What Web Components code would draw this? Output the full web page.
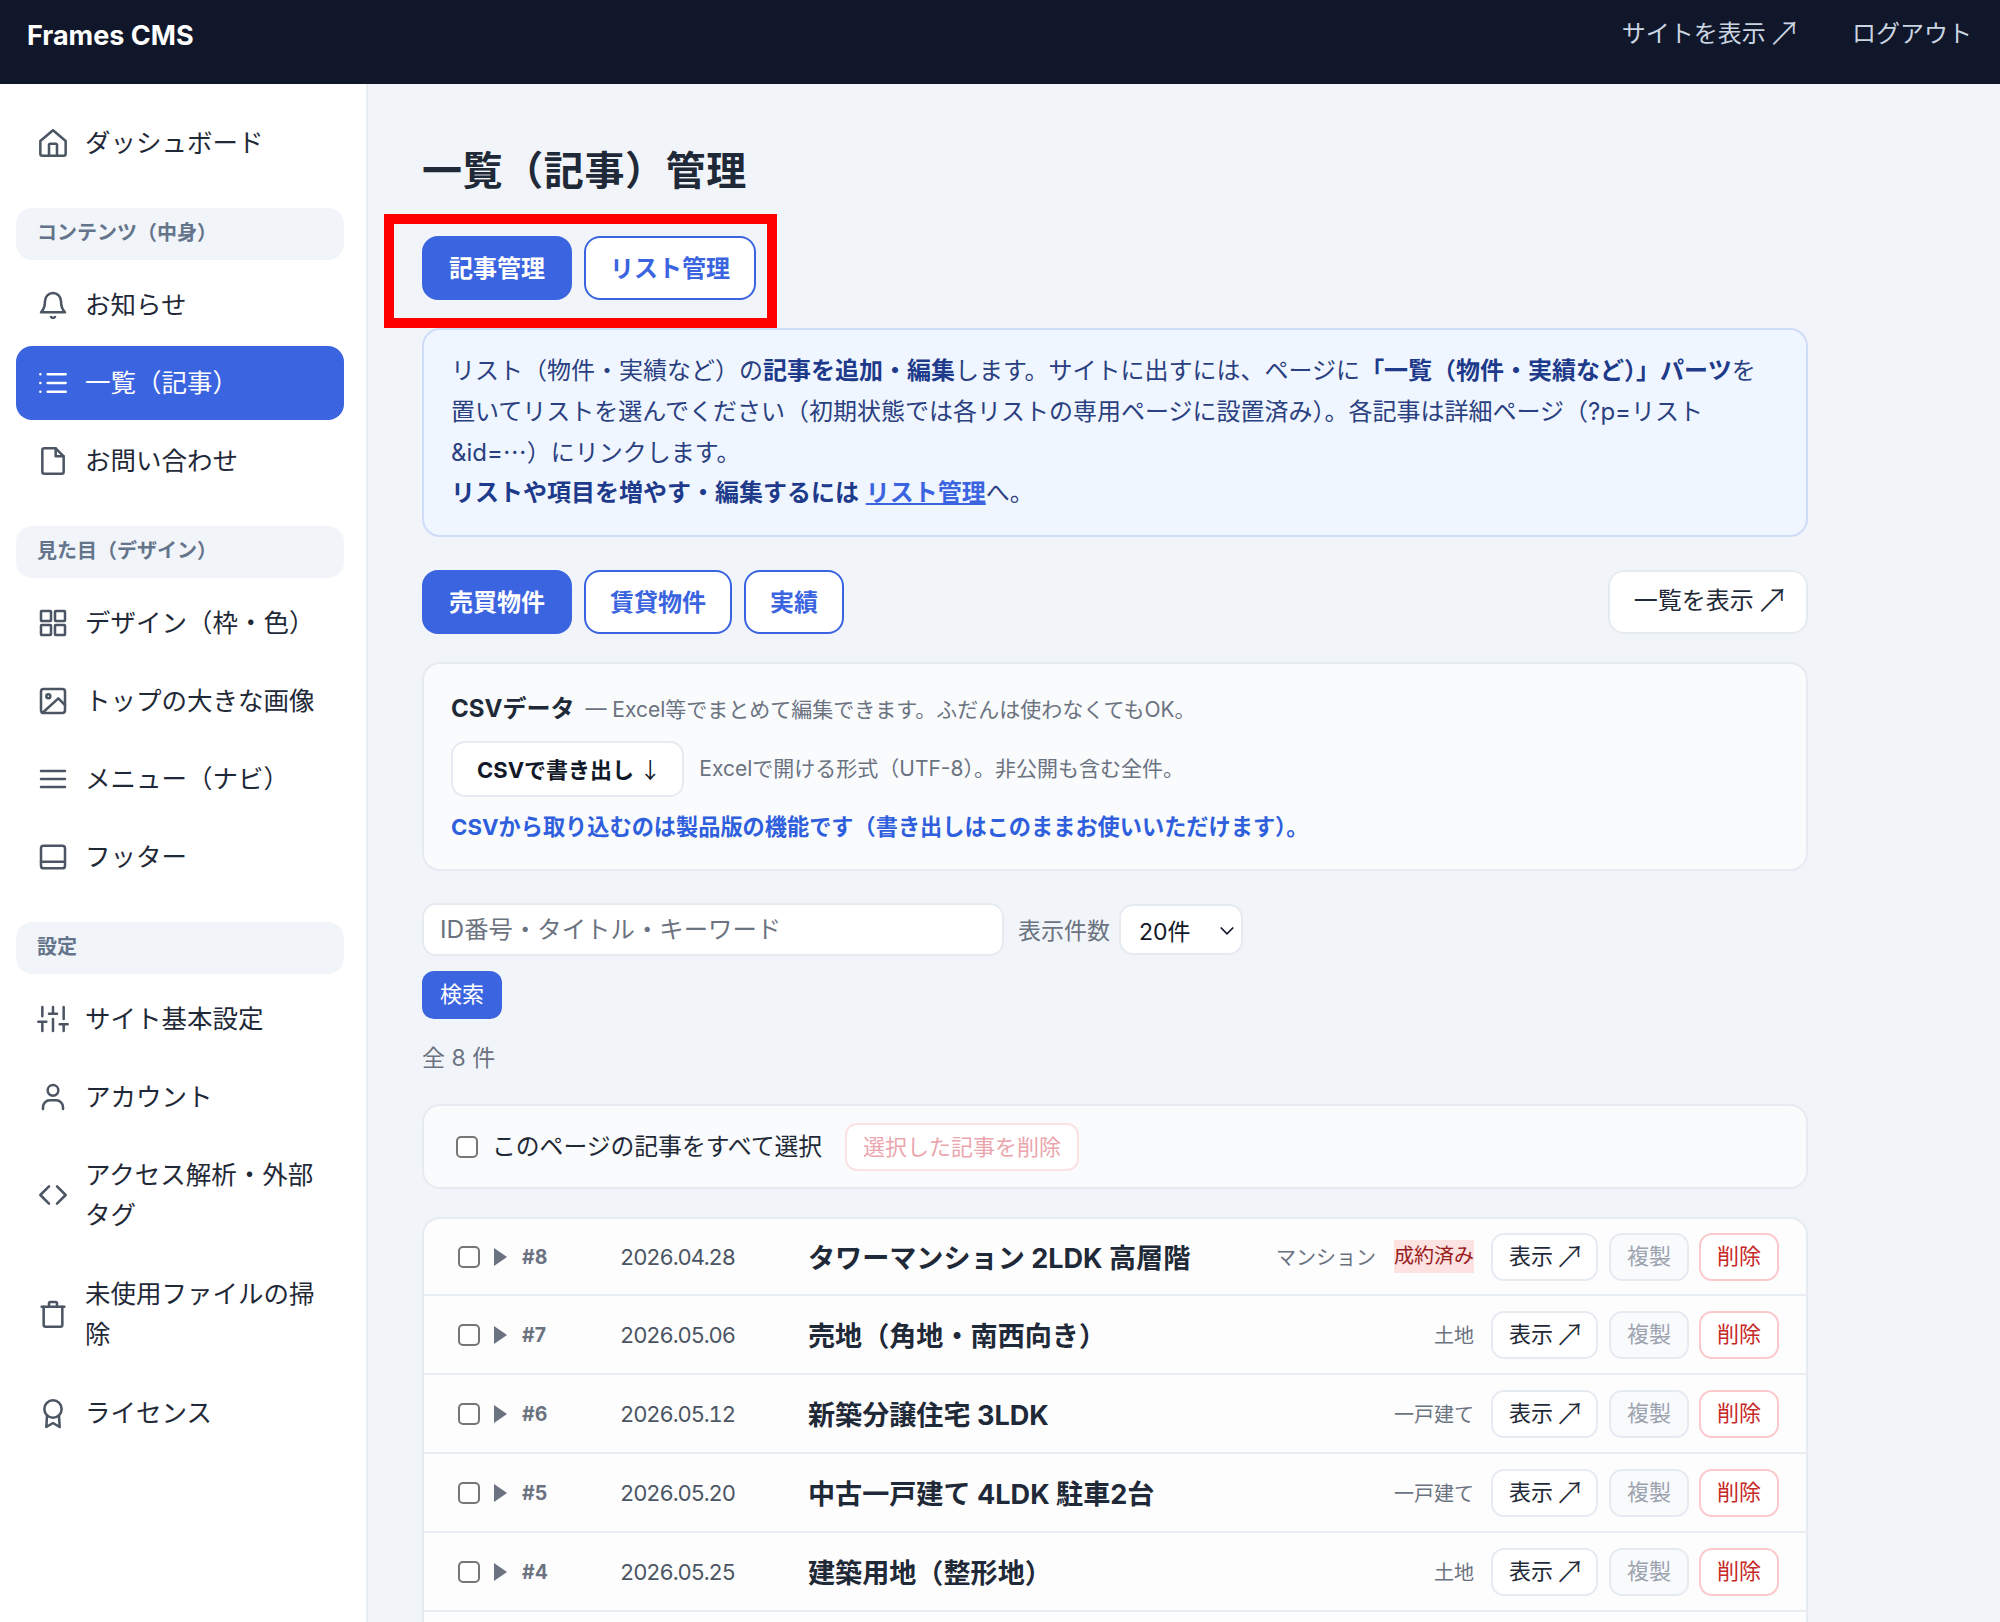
<!DOCTYPE html>
<html lang="ja">
<head>
<meta charset="utf-8">
<title>Frames CMS</title>
<style>
html, body { margin: 0; height: 100vh; overflow: hidden; }
body {
    font-family: Inter, "Noto Sans CJK JP", sans-serif;
    font-size: 24px;
    color: #1f2937;
    background: #f1f5f9;
}
</style>
</head>
<body>
<cms-app></cms-app>

<script>
const ICONS = {
    home: '<path d="M2.5 10.5 12 2.5l9.500 8V20a1.500 1.500 0 0 1-1.500 1.500H4A1.500 1.500 0 0 1 2.500 20Z"/><path d="M9 21.500V13.500a1 1 0 0 1 1-1h4a1 1 0 0 1 1 1v8"/>',
    bell: '<path d="M6 9a6 6 0 0 1 12 0c0 4.500 1 6.500 3 8.500H3c2-2 3-4 3-8.500Z"/><path d="M10.500 21a2 2 0 0 0 3 0"/>',
    list: '<path d="M8 5.500h13.500M8 12h13.500M8 18.500h13.500M2.500 5.500h.01M2.500 12h.01M2.500 18.500h.01"/>',
    file: '<path d="M14 2.500H5.500A1.500 1.500 0 0 0 4 4v16a1.500 1.500 0 0 0 1.500 1.500h13A1.500 1.500 0 0 0 20 20V8.500Z"/><path d="M14 2.500v6h6"/>',
    grid: '<rect x="3" y="3" width="7.500" height="7.500" rx=".5"/><rect x="13.500" y="3" width="7.500" height="7.500" rx=".5"/><rect x="3" y="13.500" width="7.500" height="7.500" rx=".5"/><rect x="13.500" y="13.500" width="7.500" height="7.500" rx=".5"/>',
    image: '<rect x="3" y="3" width="18" height="18" rx="2"/><circle cx="8.500" cy="8.500" r="1.500"/><path d="M21 15l-5-5L4 21"/>',
    menu: '<path d="M3 6h18M3 12h18M3 18h18"/>',
    footer: '<rect x="3" y="3.500" width="18" height="17" rx="2"/><path d="M3 15.500h18"/>',
    sliders: '<path d="M4 21v-7M4 10V3M12 21v-9M12 8V3M20 21v-5M20 12V3M1 14h6M9 8h6M17 16h6"/>',
    user: '<circle cx="12" cy="7" r="4"/><path d="M4.500 21v-1.500a5 5 0 0 1 5-5h5a5 5 0 0 1 5 5V21"/>',
    code: '<path d="M9 5.500l-6.500 6.500 6.500 6.500M15 5.500l6.500 6.500-6.500 6.500"/>',
    trash: '<path d="M3.500 6.500h17"/><path d="M9 6.500V4a1 1 0 0 1 1-1h4a1 1 0 0 1 1 1v2.500"/><path d="M5 6.500V20a1.500 1.500 0 0 0 1.500 1.500h11A1.500 1.500 0 0 0 19 20V6.500"/>',
    award: '<circle cx="12" cy="9" r="6.500"/><path d="M7.500 14l-.5 8.500 5-3 5 3-.5-8.500"/>'
};

// the arrow glyph is drawn larger than the text, so it needs pulling back in
const ARROW_CSS = `
    .arrow {
        margin: 0 -5px;
        font-family: "Noto Sans CJK JP", sans-serif;
        font-size: 1.400em;
        font-weight: 300;
        line-height: 0;
        vertical-align: -4px;
    }
`;

class CmsHeader extends HTMLElement {
    constructor() {
        super();
        const host = this.attachShadow({ mode: 'open' });
        host.innerHTML = `
            <style>
            :host {
                display: flex;
                align-items: center;
                justify-content: space-between;
                box-sizing: border-box;
                height: 84px;
                padding: 0 28px 14px 27px;
                background: #10172a;
            }
            .logo { color: #fff; font-size: 27px; font-weight: 700; }
            nav { display: flex; gap: 56px; padding-bottom: 2px; color: #cbd5e1; font-size: 24px; line-height: 34px; white-space: nowrap; }
            ${ARROW_CSS}
            </style>
            <span class="logo">Frames CMS</span>
            <nav>
                <span>サイトを表示 <span class="arrow">↗</span></span>
                <span>ログアウト</span>
            </nav>
        `;
    }
}

class NavItem extends HTMLElement {
    constructor() {
        super();
        const host = this.attachShadow({ mode: 'open' });
        host.innerHTML = `
            <style>
            :host {
                display: flex;
                align-items: center;
                gap: 16px;
                padding: 17px 23px 17px 21px;
                border-radius: 16px;
                font-size: 25.500px;
                line-height: 40px;
                color: #1f2937;
            }
            :host([active]) { background: #3b64e0; color: #fff; }
            svg {
                flex: none;
                width: 32px;
                height: 32px;
                fill: none;
                stroke: #4b5563;
                stroke-width: 1.900;
                stroke-linecap: round;
                stroke-linejoin: round;
            }
            :host([active]) svg { stroke: #fff; }
            </style>
            <svg viewBox="0 0 24 24">${ICONS[this.getAttribute('icon')] || ''}</svg>
            <span><slot></slot></span>
        `;
    }
}

class NavSection extends HTMLElement {
    constructor() {
        super();
        const host = this.attachShadow({ mode: 'open' });
        host.innerHTML = `
            <style>
            :host {
                display: block;
                box-sizing: border-box;
                height: 52px;
                margin: 24px 0 4px;
                padding: 0 21px;
                border-radius: 16px;
                background: #f1f5f9;
                color: #64748b;
                font-size: 20px;
                font-weight: 700;
                line-height: 50px;
            }
            </style>
            <slot></slot>
        `;
    }
}

class CmsSidebar extends HTMLElement {
    constructor() {
        super();
        const host = this.attachShadow({ mode: 'open' });
        host.innerHTML = `
            <style>
            :host {
                display: flex;
                flex: none;
                flex-direction: column;
                gap: 4px;
                box-sizing: border-box;
                width: 368px;
                padding: 22px 22px 0 16px;
                background: #fff;
                border-right: 2px solid #e8edf3;
            }
            .two { margin-top: 1px; }
            </style>
            <nav-item icon="home">ダッシュボード</nav-item>
            <nav-section>コンテンツ（中身）</nav-section>
            <nav-item icon="bell">お知らせ</nav-item>
            <nav-item icon="list" active>一覧（記事）</nav-item>
            <nav-item icon="file">お問い合わせ</nav-item>
            <nav-section>見た目（デザイン）</nav-section>
            <nav-item icon="grid">デザイン（枠・色）</nav-item>
            <nav-item icon="image">トップの大きな画像</nav-item>
            <nav-item icon="menu">メニュー（ナビ）</nav-item>
            <nav-item icon="footer">フッター</nav-item>
            <nav-section>設定</nav-section>
            <nav-item icon="sliders">サイト基本設定</nav-item>
            <nav-item icon="user">アカウント</nav-item>
            <nav-item icon="code">アクセス解析・外部タグ</nav-item>
            <nav-item class="two" icon="trash">未使用ファイルの掃除</nav-item>
            <nav-item class="two" icon="award">ライセンス</nav-item>
        `;
    }
}

class TabButton extends HTMLElement {
    constructor() {
        super();
        const host = this.attachShadow({ mode: 'open' });
        host.innerHTML = `
            <style>
            :host {
                display: block;
                box-sizing: border-box;
                height: 64px;
                padding: 0 24px;
                border: 2px solid #3b64e0;
                border-radius: 16px;
                background: #fff;
                color: #3b64e0;
                font-size: 24px;
                font-weight: 700;
                line-height: 62px;
            }
            :host([active]) { padding: 0 25px; background: #3b64e0; color: #fff; }
            </style>
            <slot></slot>
        `;
    }
}

class RedMark extends HTMLElement {
    constructor() {
        super();
        const host = this.attachShadow({ mode: 'open' });
        host.innerHTML = `
            <style>
            :host {
                position: absolute;
                inset: -22px -21px -28px -38px;
                border: 10px solid #ff0000;
                pointer-events: none;
            }
            </style>
        `;
    }
}

class InfoBox extends HTMLElement {
    constructor() {
        super();
        const host = this.attachShadow({ mode: 'open' });
        host.innerHTML = `
            <style>
            :host {
                display: block;
                margin-top: 28px;
                padding: 21px 27px;
                border: 2px solid #cfdcf7;
                border-radius: 18px;
                background: #eff6ff;
                color: #2b4080;
                line-height: 40.800px;
                white-space: nowrap;
            }
            b { color: #1e3a8a; }
            a { color: #3b64e0; text-decoration: underline; font-weight: 700; }
            .dots { font-family: "Noto Sans CJK JP", sans-serif; line-height: 0; }
            </style>
            リスト（物件・実績など）の<b>記事を追加・編集</b>します。サイトに出すには、ページに<b>「一覧（物件・実績など）」パーツ</b>を<br>
            置いてリストを選んでください（初期状態では各リストの専用ページに設置済み）。各記事は詳細ページ（?p=リスト<br>
            &amp;id=<span class="dots">…</span>）にリンクします。<br>
            <b>リストや項目を増やす・編集するには</b> <a>リスト管理</a>へ。
        `;
    }
}

class CsvPanel extends HTMLElement {
    constructor() {
        super();
        const host = this.attachShadow({ mode: 'open' });
        host.innerHTML = `
            <style>
            :host {
                display: block;
                box-sizing: border-box;
                height: 209px;
                margin-top: 28px;
                padding: 25px 27px 0;
                border: 2px solid #e6ebf2;
                border-radius: 18px;
                background: #f9fbfd;
            }
            .head { display: flex; align-items: baseline; gap: 11px; height: 40px; line-height: 40px; }
            .head b { font-size: 24px; color: #1f2937; }
            .sub { font-size: 21px; color: #6b7280; }
            .row { display: flex; align-items: center; gap: 15px; margin-top: 12px; }
            .btn {
                box-sizing: border-box;
                height: 56px;
                padding: 0 21px 0 24px;
                border: 2px solid #e6ebf2;
                border-radius: 14px;
                background: #fff;
                color: #111827;
                font-size: 22px;
                font-weight: 700;
                line-height: 50px;
            }
            .arrow { font-family: "Noto Sans CJK JP", sans-serif; font-weight: 400; }
            .row .sub { margin-top: -4px; }
            .pro { margin-top: 14px; color: #2f5fdc; font-size: 22.200px; font-weight: 700; line-height: 32px; }
            </style>
            <div class="head"><b>CSVデータ</b><span class="sub">— Excel等でまとめて編集できます。ふだんは使わなくてもOK。</span></div>
            <div class="row">
                <span class="btn">CSVで書き出し <span class="arrow">↓</span></span>
                <span class="sub">Excelで開ける形式（UTF-8）。非公開も含む全件。</span>
            </div>
            <div class="pro">CSVから取り込むのは製品版の機能です（書き出しはこのままお使いいただけます）。</div>
        `;
    }
}

class SearchBar extends HTMLElement {
    constructor() {
        super();
        const host = this.attachShadow({ mode: 'open' });
        host.innerHTML = `
            <style>
            :host { display: block; margin-top: 32px; }
            .top { display: flex; align-items: center; height: 53px; }
            .field, .select {
                box-sizing: border-box;
                flex: none;
                border: 2px solid #e6ebf2;
                border-radius: 14px;
                background: #fff;
            }
            .field {
                width: 582px;
                height: 53px;
                padding: 0 16px;
                color: #6b7280;
                font-size: 24.400px;
                line-height: 48px;
            }
            .label { margin: 0 9px 0 14px; padding-bottom: 2px; color: #6b7280; font-size: 23px; }
            .select {
                display: flex;
                align-items: center;
                justify-content: space-between;
                width: 124px;
                height: 51px;
                padding: 0 4px 0 18px;
                color: #111827;
                font-size: 23px;
            }
            .select svg { width: 20px; height: 20px; fill: none; stroke: #111827; stroke-width: 1.400; }
            .go {
                width: 80px;
                height: 48px;
                margin-top: 15px;
                border-radius: 12px;
                background: #3b64e0;
                color: #fff;
                font-size: 22px;
                line-height: 46px;
                text-align: center;
            }
            .count { margin-top: 21px; color: #6b7280; font-size: 23px; line-height: 36px; }
            </style>
            <div class="top">
                <div class="field">ID番号・タイトル・キーワード</div>
                <span class="label">表示件数</span>
                <div class="select"><span>20件</span><svg viewBox="0 0 16 16"><path d="M3 6l5 5 5-5"/></svg></div>
            </div>
            <div class="go">検索</div>
            <div class="count">全 8 件</div>
        `;
    }
}

class BulkBar extends HTMLElement {
    constructor() {
        super();
        const host = this.attachShadow({ mode: 'open' });
        host.innerHTML = `
            <style>
            :host {
                display: flex;
                align-items: center;
                box-sizing: border-box;
                height: 85px;
                margin-top: 28px;
                padding: 0 30px 0 32px;
                border: 2px solid #e6ebf2;
                border-radius: 18px;
                background: #f9fbfd;
            }
            input {
                appearance: none;
                box-sizing: border-box;
                flex: none;
                width: 22px;
                height: 22px;
                margin: 0 14px 0 0;
                border: 2px solid #767676;
                border-radius: 5px;
                background: #fff;
            }
            .label { padding-bottom: 4px; font-size: 23.800px; }
            .del {
                box-sizing: border-box;
                height: 48px;
                margin-left: 23px;
                padding: 0 16px;
                border: 2px solid #fde2e4;
                border-radius: 12px;
                background: #fff;
                color: #eba6ad;
                font-size: 22px;
                line-height: 44px;
            }
            </style>
            <input type="checkbox">
            <span class="label">このページの記事をすべて選択</span>
            <span class="del">選択した記事を削除</span>
        `;
    }
}

class ArticleRow extends HTMLElement {
    constructor() {
        super();
        const host = this.attachShadow({ mode: 'open' });
        const badge = this.getAttribute('badge');
        host.innerHTML = `
            <style>
            :host {
                display: flex;
                align-items: center;
                box-sizing: border-box;
                height: 79px;
                padding: 0 27px 0 34px;
                border-bottom: 2px solid #e8edf3;
            }
            :host(:first-child) { height: 77px; }
            input {
                appearance: none;
                box-sizing: border-box;
                flex: none;
                width: 22px;
                height: 22px;
                margin: 0 14px 0 0;
                border: 2px solid #767676;
                border-radius: 5px;
                background: #fff;
            }
            .tri {
                flex: none;
                width: 0;
                height: 0;
                margin-right: 15px;
                border-left: 13px solid #6b7280;
                border-top: 9px solid transparent;
                border-bottom: 9px solid transparent;
            }
            .id { flex: none; width: 98px; color: #6b7280; font-size: 19.500px; font-weight: 700; }
            .date {
                flex: none;
                width: 188px;
                color: #4b5563;
                font-size: 22px;
                font-variant-numeric: tabular-nums;
                letter-spacing: -1.100px;
            }
            .title { flex: 1; color: #1f2937; font-size: 27.100px; font-weight: 700; white-space: nowrap; }
            .cat { color: #6b7280; font-size: 20px; }
            .badge {
                margin-left: 18px;
                background: #fde2e2;
                color: #991b1b;
                font-size: 20px;
                line-height: 33px;
            }
            .btn {
                box-sizing: border-box;
                height: 48px;
                padding: 0 16px;
                border: 2px solid #e6ebf2;
                border-radius: 13px;
                background: #fff;
                color: #1f2937;
                font-size: 22px;
                line-height: 42px;
                white-space: nowrap;
            }
            .show { margin-left: 17px; }
            .copy { margin-left: 11px; background: #f8fafc; color: #9ca3af; }
            .del { margin-left: 10px; border-color: #fbc9cc; color: #c62828; }
            ${ARROW_CSS}
            </style>
            <input type="checkbox">
            <span class="tri"></span>
            <span class="id">#${this.getAttribute('num')}</span>
            <span class="date">${this.getAttribute('date')}</span>
            <span class="title"><slot></slot></span>
            <span class="cat">${this.getAttribute('cat')}</span>
            ${badge ? `<span class="badge">${badge}</span>` : ''}
            <span class="btn show">表示 <span class="arrow">↗</span></span>
            <span class="btn copy">複製</span>
            <span class="btn del">削除</span>
        `;
    }
}

class ArticleList extends HTMLElement {
    constructor() {
        super();
        const host = this.attachShadow({ mode: 'open' });
        host.innerHTML = `
            <style>
            :host {
                display: block;
                margin-top: 28px;
                padding-bottom: 80px;
                border: 2px solid #e6ebf2;
                border-radius: 18px;
                background: #fdfdfe;
                overflow: hidden;
            }
            </style>
            <slot></slot>
        `;
    }
}

class CmsMain extends HTMLElement {
    constructor() {
        super();
        const host = this.attachShadow({ mode: 'open' });
        host.innerHTML = `
            <style>
            :host {
                display: block;
                flex: 1;
                min-width: 0;
                box-sizing: border-box;
                padding: 59px 192px 0 54px;
            }
            h1 { margin: 0; font-size: 40px; line-height: 56px; color: #1f2937; letter-spacing: .6px; }
            .tabs { display: flex; gap: 12px; }
            .first { position: relative; width: fit-content; margin-top: 37px; }
            .second { align-items: center; margin-top: 33px; }
            .view {
                box-sizing: border-box;
                height: 64px;
                margin-left: auto;
                padding: 0 22px 0 24px;
                border: 2px solid #e6ebf2;
                border-radius: 16px;
                background: #fff;
                color: #1f2937;
                line-height: 58px;
                white-space: nowrap;
            }
            ${ARROW_CSS}
            </style>
            <h1>一覧（記事）管理</h1>
            <div class="tabs first">
                <tab-button active>記事管理</tab-button>
                <tab-button>リスト管理</tab-button>
                <red-mark></red-mark>
            </div>
            <info-box></info-box>
            <div class="tabs second">
                <tab-button active>売買物件</tab-button>
                <tab-button>賃貸物件</tab-button>
                <tab-button>実績</tab-button>
                <span class="view">一覧を表示 <span class="arrow">↗</span></span>
            </div>
            <csv-panel></csv-panel>
            <search-bar></search-bar>
            <bulk-bar></bulk-bar>
            <article-list>
                <article-row num="8" date="2026.04.28" cat="マンション" badge="成約済み">タワーマンション 2LDK 高層階</article-row>
                <article-row num="7" date="2026.05.06" cat="土地">売地（角地・南西向き）</article-row>
                <article-row num="6" date="2026.05.12" cat="一戸建て">新築分譲住宅 3LDK</article-row>
                <article-row num="5" date="2026.05.20" cat="一戸建て">中古一戸建て 4LDK 駐車2台</article-row>
                <article-row num="4" date="2026.05.25" cat="土地">建築用地（整形地）</article-row>
            </article-list>
        `;
    }
}

class CmsApp extends HTMLElement {
    constructor() {
        super();
        const host = this.attachShadow({ mode: 'open' });
        host.innerHTML = `
            <style>
            :host { display: flex; flex-direction: column; height: 100vh; }
            .body { display: flex; flex: 1; min-height: 0; }
            </style>
            <cms-header></cms-header>
            <div class="body">
                <cms-sidebar></cms-sidebar>
                <cms-main></cms-main>
            </div>
        `;
    }
}

customElements.define('cms-header', CmsHeader);
customElements.define('nav-item', NavItem);
customElements.define('nav-section', NavSection);
customElements.define('cms-sidebar', CmsSidebar);
customElements.define('tab-button', TabButton);
customElements.define('red-mark', RedMark);
customElements.define('info-box', InfoBox);
customElements.define('csv-panel', CsvPanel);
customElements.define('search-bar', SearchBar);
customElements.define('bulk-bar', BulkBar);
customElements.define('article-row', ArticleRow);
customElements.define('article-list', ArticleList);
customElements.define('cms-main', CmsMain);
customElements.define('cms-app', CmsApp);
</script>
</body>
</html>
